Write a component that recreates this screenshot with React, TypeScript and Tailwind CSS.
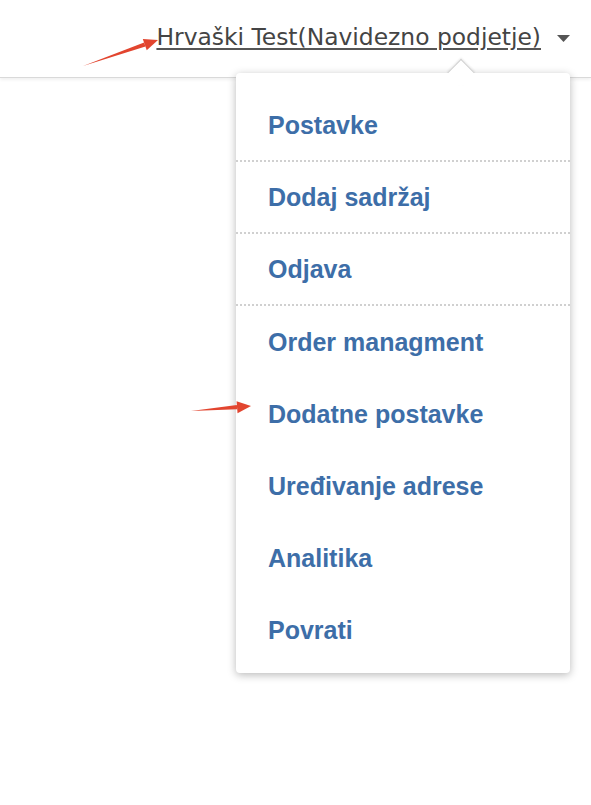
import React from "react";

const items = [
  { label: "Postavke", sep: true },
  { label: "Dodaj sadržaj", sep: true },
  { label: "Odjava", sep: true },
  { label: "Order managment", sep: false },
  { label: "Dodatne postavke", sep: false },
  { label: "Uređivanje adrese", sep: false },
  { label: "Analitika", sep: false },
  { label: "Povrati", sep: false },
];

function RedArrow({ x1, y1, x2, y2 }: { x1: number; y1: number; x2: number; y2: number }) {
  const ang = Math.atan2(y2 - y1, x2 - x1);
  const len = 14;
  const w = 6;
  const bx = x2 - Math.cos(ang) * len;
  const by = y2 - Math.sin(ang) * len;
  const px = -Math.sin(ang) * w;
  const py = Math.cos(ang) * w;
  return (
    <g fill="#e2452f">
      <polygon
        points={`${x1},${y1} ${bx + px * 0.35},${by + py * 0.35} ${bx - px * 0.35},${by - py * 0.35}`}
      />
      <polygon points={`${x2},${y2} ${bx + px},${by + py} ${bx - px},${by - py}`} />
    </g>
  );
}

export default function App() {
  return (
    <div className="relative h-[805px] w-[591px] overflow-hidden bg-white">
      <header className="flex h-[78px] items-start justify-end border-b border-[#d9d9d9] pr-[21px] pt-[22px] shadow-[0_2px_3px_rgba(0,0,0,0.06)]">
        <a
          href="#"
          className="text-[23.4px] leading-[31px] text-[#444] underline decoration-[#555] underline-offset-[3px]"
          style={{ fontFamily: '"DejaVu Sans", Verdana, sans-serif' }}
        >
          Hrvaški Test(Navidezno podjetje)
        </a>
        <svg width="13" height="7" viewBox="0 0 13 7" className="ml-[16px] mt-[13px]" aria-hidden>
          <polygon points="0,0 13,0 6.5,7" fill="#555" />
        </svg>
      </header>

      <div className="absolute left-[236px] top-[73px] w-[334px] rounded-[4px] bg-white pb-[7px] pt-[17px] shadow-[0_2px_9px_rgba(0,0,0,0.28)]">
        <div className="absolute left-[215px] top-[-10px] h-[20px] w-[20px] rotate-45 border-l border-t border-[#cfcfcf] bg-white shadow-[-1px_-1px_2px_rgba(0,0,0,0.08)]" />
        <div className="absolute left-[205px] top-0 h-[12px] w-[40px] bg-white" />
        <ul className="relative" style={{ fontFamily: '"Liberation Sans", Arial, sans-serif' }}>
          {items.map((it) => (
            <li
              key={it.label}
              className={`flex h-[72px] items-center pl-[32px] pt-[2px] text-[25px] font-bold text-[#3d6ea8] ${
                it.sep ? "border-b-2 border-dotted border-[#d0d0d0]" : ""
              }`}
            >
              {it.label}
            </li>
          ))}
        </ul>
      </div>

      <svg className="pointer-events-none absolute left-0 top-0" width="591" height="805" aria-hidden>
        <RedArrow x1={83} y1={66} x2={158} y2={40} />
        <RedArrow x1={191} y1={411} x2={251} y2={406} />
      </svg>
    </div>
  );
}
